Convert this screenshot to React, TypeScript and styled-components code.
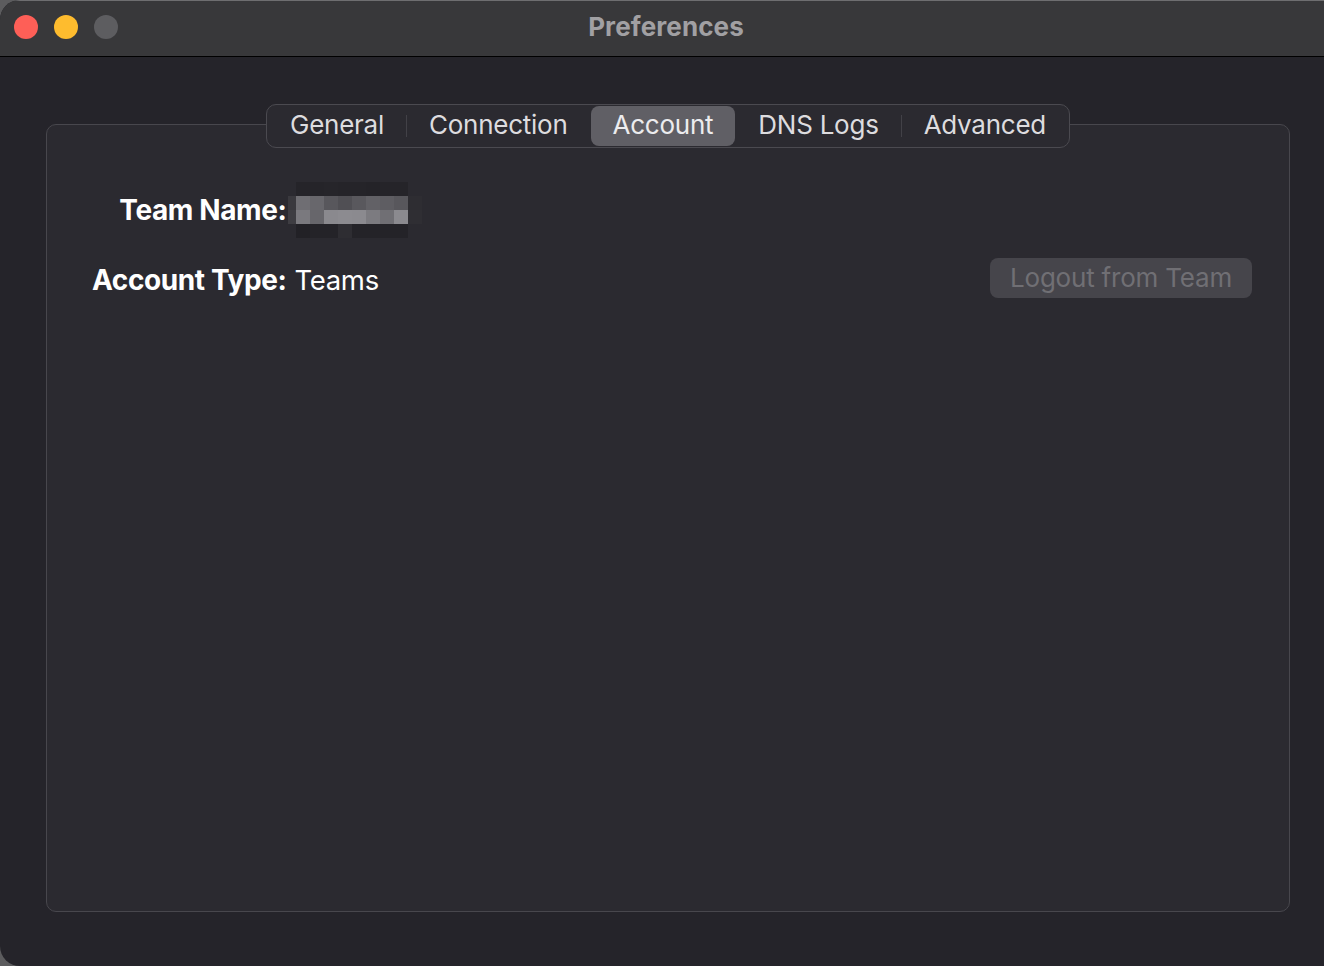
import React from "react";
import styled, { createGlobalStyle } from "styled-components";

const GlobalStyle = createGlobalStyle`
  html, body { margin: 0; padding: 0; background: #5c5c5e; }
  body { font-family: Inter, "Liberation Sans", sans-serif; -webkit-font-smoothing: antialiased; }
`;

const Window = styled.div`
  width: 1324px;
  height: 966px;
  display: flex;
  flex-direction: column;
  background: #25242a;
  border-radius: 20px 0 0 20px;
  overflow: hidden;
`;

const TitleBar = styled.div`
  flex: none;
  display: flex;
  align-items: center;
  padding: 0 14px 3px;
  background: #38383a;
  border-top: 1px solid #6e6e70;
  border-bottom: 1px solid #000;
  box-sizing: border-box;
  height: 57px;
  position: relative;
`;

const Lights = styled.div`
  display: flex;
  gap: 16px;
`;

const Light = styled.span<{ $c: string }>`
  width: 24px;
  height: 24px;
  border-radius: 50%;
  background: ${(p) => p.$c};
`;

const Title = styled.div`
  position: absolute;
  left: 8px;
  right: 0;
  top: 10px;
  text-align: center;
  font-size: 26px;
  font-weight: 700;
  color: #a1a0a3;
  letter-spacing: 0.1px;
  pointer-events: none;
`;

const Body = styled.div`
  flex: 1;
  display: flex;
  flex-direction: column;
  padding: 47px 34px 54px 46px;
`;

const TabRow = styled.div`
  display: flex;
  justify-content: center;
  position: relative;
  z-index: 1;
`;

const TabBar = styled.div`
  display: flex;
  align-items: center;
  height: 44px;
  box-sizing: border-box;
  padding: 0 1px;
  border: 1px solid #4b4a50;
  border-radius: 10px;
  background: #2b2a30;
`;

const Tab = styled.div<{ $active?: boolean }>`
  height: 40px;
  box-sizing: border-box;
  display: flex;
  align-items: center;
  padding: 0 22px 3px;
  border-radius: 8px;
  font-size: 26px;
  letter-spacing: -0.25px;
  color: ${(p) => (p.$active ? "#ececee" : "#dddcdf")};
  background: ${(p) => (p.$active ? "#605f65" : "transparent")};
`;

const Sep = styled.span<{ $hidden?: boolean }>`
  width: 1px;
  height: 22px;
  background: ${(p) => (p.$hidden ? "transparent" : "#424147")};
`;

const Panel = styled.div`
  flex: 1;
  margin-top: -24px;
  border: 1px solid #48474d;
  border-radius: 10px;
  background: #2b2a30;
  padding: 57px 37px 0 45px;
`;

const InfoGrid = styled.div`
  display: grid;
  grid-template-columns: auto auto 1fr auto;
  grid-template-rows: 56px 40px;
  column-gap: 8px;
  row-gap: 20px;
  align-items: center;
`;

const Label = styled.div<{ $shift?: number }>`
  justify-self: end;
  font-size: 28px;
  font-weight: 700;
  letter-spacing: -0.4px;
  color: #ffffff;
  padding-top: ${(p) => p.$shift ?? 0}px;
`;

const Value = styled.div<{ $shift?: number }>`
  font-size: 27.5px;
  letter-spacing: -0.3px;
  color: #ffffff;
  padding-top: ${(p) => p.$shift ?? 0}px;
`;

const Blur = styled.div`
  display: grid;
  grid-template-columns: 8px repeat(9, 14px);
  grid-template-rows: repeat(4, 14px);
  margin-left: -6px;
`;

const Cell = styled.span<{ $c: string }>`
  background: ${(p) => p.$c};
`;

const Button = styled.button`
  grid-column: 4;
  width: 262px;
  height: 40px;
  border: none;
  border-radius: 8px;
  background: #46454b;
  color: #706f74;
  font-family: inherit;
  font-size: 26px;
  letter-spacing: -0.2px;
  padding: 0 0 2px;
`;

const blurRows: string[][] = [
  ["#2b2a30", "#252429", "#252429", "#26252a", "#252429", "#252429", "#242328", "#252429", "#252429", "#2b2a30"],
  ["#3a393e", "#6f6e73", "#68676c", "#58575c", "#504f54", "#59585d", "#626166", "#5e5d62", "#58575c", "#2e2d32"],
  ["#3e3d42", "#7a797e", "#67666b", "#8a898e", "#8c8b90", "#8b8a8f", "#7c7b80", "#706f74", "#8b8a8f", "#2f2e33"],
  ["#2b2a30", "#222126", "#242328", "#242328", "#2e2d32", "#242328", "#242328", "#242328", "#242328", "#2b2a30"],
];

const tabs = ["General", "Connection", "Account", "DNS Logs", "Advanced"];
const activeIndex = 2;

export default function App() {
  return (
    <>
      <GlobalStyle />
      <Window>
        <TitleBar>
          <Lights>
            <Light $c="#fe5f57" />
            <Light $c="#febc2e" />
            <Light $c="#5d5d60" />
          </Lights>
          <Title>Preferences</Title>
        </TitleBar>
        <Body>
          <TabRow>
            <TabBar>
              {tabs.map((t, i) => (
                <React.Fragment key={t}>
                  {i > 0 && <Sep $hidden={i === activeIndex || i - 1 === activeIndex} />}
                  <Tab $active={i === activeIndex}>{t}</Tab>
                </React.Fragment>
              ))}
            </TabBar>
          </TabRow>
          <Panel>
            <InfoGrid>
              <Label>Team Name:</Label>
              <Blur>
                {blurRows.flatMap((row, r) => row.map((c, k) => <Cell key={`${r}-${k}`} $c={c} />))}
              </Blur>
              <span />
              <span />
              <Label $shift={4}>Account Type:</Label>
              <Value $shift={4}>Teams</Value>
              <span />
              <Button>Logout from Team</Button>
            </InfoGrid>
          </Panel>
        </Body>
      </Window>
    </>
  );
}
